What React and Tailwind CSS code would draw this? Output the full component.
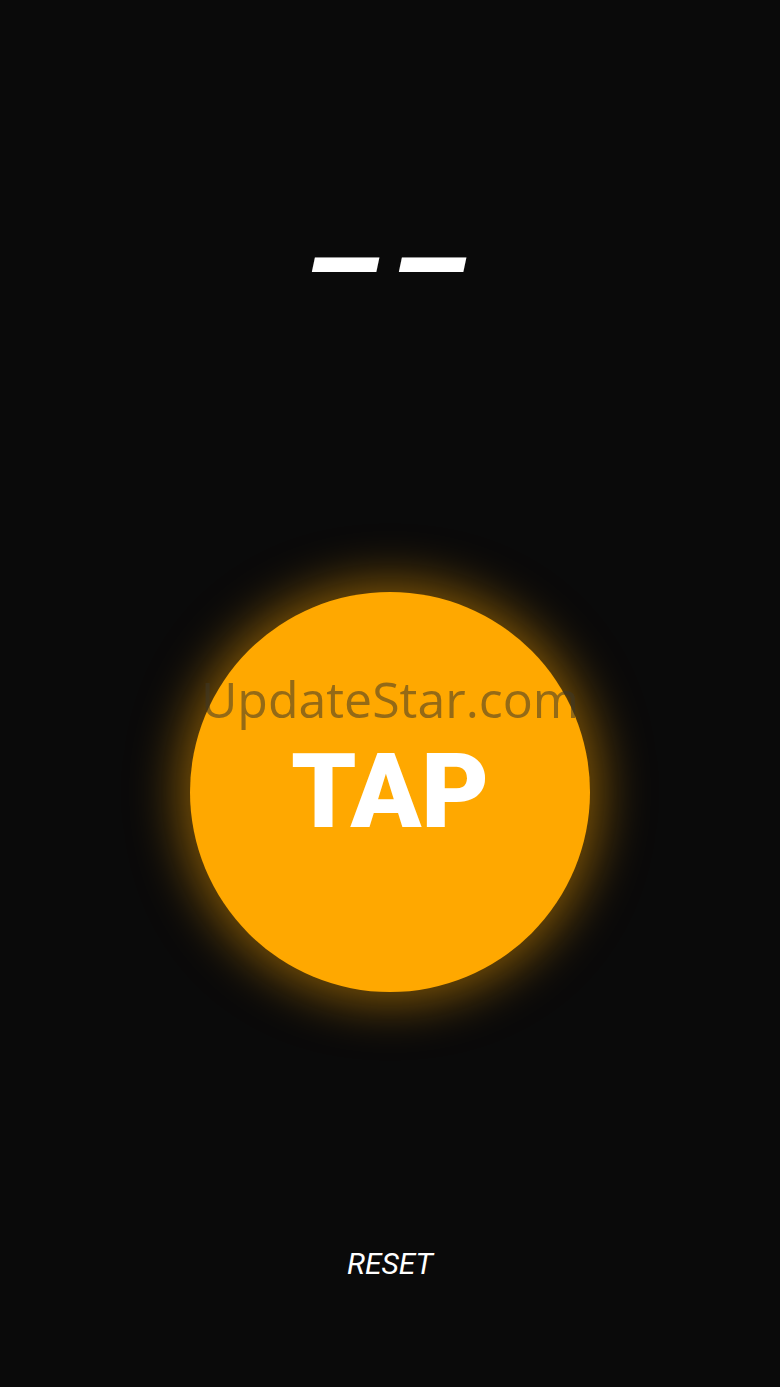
import React from "react";

export default function App() {
  return (
    <div className="w-full h-[1387px] bg-[#0a0a0a] flex flex-col items-center font-['Roboto',sans-serif] overflow-hidden">
      {/* score placeholder */}
      <div className="h-[532px] w-full flex items-center justify-center pr-[7px]">
        <span className="text-white italic font-bold text-[131px] leading-none [word-spacing:-26px]">– –</span>
      </div>

      {/* tap button */}
      <button className="relative mt-[60px] size-[400px] shrink-0 rounded-full bg-[#ffa800] shadow-[0_0_50px_10px_rgba(255,168,0,0.5)] flex items-center justify-center">
        <span className="text-white font-black text-[104px] leading-none">TAP</span>
        <span className="absolute left-1/2 top-[82px] -translate-x-1/2 whitespace-nowrap text-[50px] leading-none font-['Open_Sans',sans-serif] text-[rgba(60,55,40,0.55)] pointer-events-none">
          UpdateStar.com
        </span>
      </button>

      <button className="mt-[257px] text-white italic text-[30px] leading-[30px]">RESET</button>
    </div>
  );
}
